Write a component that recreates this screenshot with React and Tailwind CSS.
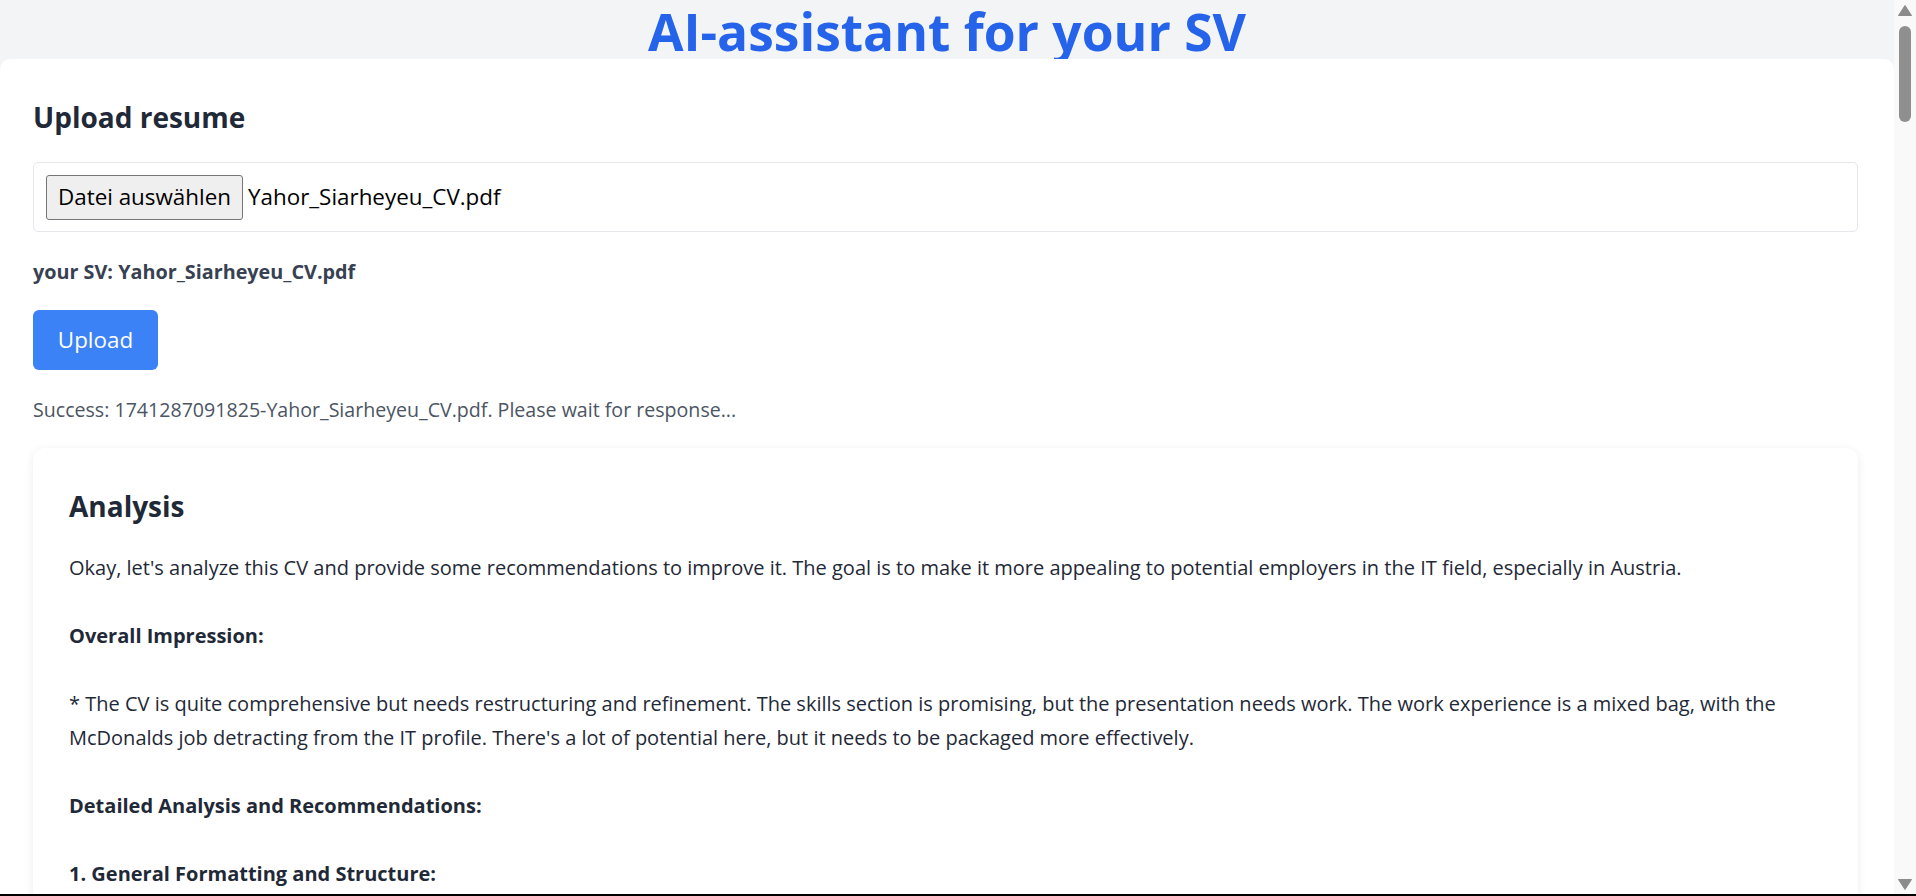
import React from "react";

const analysisLines = [
  { text: "Okay, let's analyze this CV and provide some recommendations to improve it. The goal is to make it more appealing to potential employers in the IT field, especially in Austria." },
  { text: "" },
  { text: "Overall Impression:", bold: true },
  { text: "" },
  { text: "* The CV is quite comprehensive but needs restructuring and refinement. The skills section is promising, but the presentation needs work. The work experience is a mixed bag, with the" },
  { text: "McDonalds job detracting from the IT profile. There's a lot of potential here, but it needs to be packaged more effectively." },
  { text: "" },
  { text: "Detailed Analysis and Recommendations:", bold: true },
  { text: "" },
  { text: "1. General Formatting and Structure:", bold: true },
  { text: "" },
  { text: "" },
];

function Scrollbar() {
  return (
    <div className="w-[22px] shrink-0 bg-[#f9f9f9] flex flex-col items-center">
      <svg width="14" height="11" viewBox="0 0 14 11" className="mt-[5px]">
        <path d="M7 0.5 L13.5 10.5 L0.5 10.5 Z" fill="#8b8b8b" strokeLinejoin="round" stroke="#8b8b8b" />
      </svg>
      <div className="mt-[10px] w-[12px] h-[96px] rounded-full bg-[#8f8f8f]" />
      <div className="flex-1" />
      <svg width="14" height="11" viewBox="0 0 14 11" className="mb-[4px]">
        <path d="M0.5 0.5 L13.5 0.5 L7 10.5 Z" fill="#8b8b8b" strokeLinejoin="round" stroke="#8b8b8b" />
      </svg>
    </div>
  );
}

export default function App() {
  return (
    <div className="h-[896px] w-full flex flex-col overflow-hidden bg-[#f3f4f6] font-['Segoe_UI','Open_Sans',sans-serif]">
      <div className="flex-1 min-h-0 flex">
        <main className="flex-1 min-w-0 flex flex-col overflow-hidden">
          {/* Titel */}
          <h1 className="pt-[6px] pb-[3px] text-center text-[51.5px] leading-[50px] font-bold text-[#2563eb] whitespace-nowrap">
            AI-assistant for your SV
          </h1>

          <section className="flex-1 bg-white rounded-t-[10px] pl-[33px] pr-[36px] pt-[41px]">
            <h2 className="text-[28px] leading-[34px] font-bold text-[#1f2937]">Upload resume</h2>

            {/* file input */}
            <div className="mt-[28px] h-[70px] border border-[#e5e7eb] rounded-[5px] px-[12px] flex items-center">
              <button className="w-[197px] h-[45px] bg-[#efefef] border border-[#767676] rounded-[3px] text-[22.4px] text-black flex items-center justify-center whitespace-nowrap">
                Datei auswählen
              </button>
              <span className="ml-[5px] text-[22.4px] text-black">Yahor_Siarheyeu_CV.pdf</span>
            </div>

            <p className="mt-[26px] text-[19.8px] leading-[28px] font-bold text-[#374151]">
              your SV: Yahor_Siarheyeu_CV.pdf
            </p>

            <button className="mt-[24px] w-[125px] h-[60px] bg-[#3b82f6] rounded-[6px] text-white text-[22.4px] flex items-center justify-center">
              Upload
            </button>

            <p className="mt-[26px] text-[19.6px] leading-[28px] text-[#4b5563]">
              Success: 1741287091825-Yahor_Siarheyeu_CV.pdf. Please wait for response...
            </p>

            {/* Analyse */}
            <div className="mt-[24px] bg-white rounded-[12px] shadow-[0_2px_10px_rgba(0,0,0,0.08)] pl-[36px] pr-[36px] pt-[41px] pb-[40px]">
              <h2 className="text-[28px] leading-[34px] font-bold text-[#1f2937]">Analysis</h2>
              <div className="mt-[28px] text-[20px] leading-[34px] text-[#1f2937]">
                {analysisLines.map((line, i) => (
                  <div key={i} className={`h-[34px] whitespace-nowrap ${line.bold ? "font-bold" : ""}`}>
                    {line.text}
                  </div>
                ))}
              </div>
            </div>
          </section>
        </main>
        <Scrollbar />
      </div>
      <div className="h-[2px] bg-black shrink-0" />
    </div>
  );
}
